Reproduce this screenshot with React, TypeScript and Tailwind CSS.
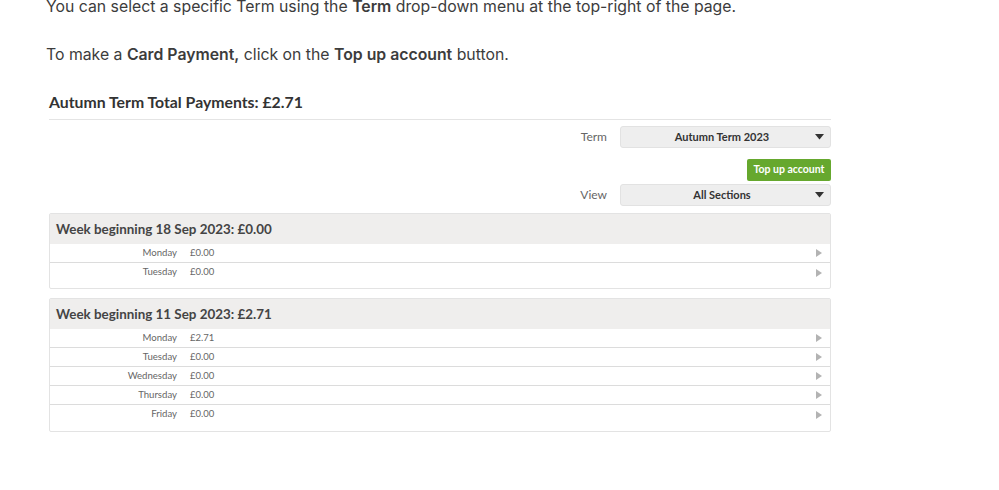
import React from "react";

const week1 = [
  { d: "Monday", a: "£0.00" },
  { d: "Tuesday", a: "£0.00" },
];
const week2 = [
  { d: "Monday", a: "£2.71" },
  { d: "Tuesday", a: "£0.00" },
  { d: "Wednesday", a: "£0.00" },
  { d: "Thursday", a: "£0.00" },
  { d: "Friday", a: "£0.00" },
];

function Caret() {
  return (
    <svg width="9" height="6" viewBox="0 0 9 6" className="shrink-0">
      <path d="M0 0 L9 0 L4.5 5.5 Z" fill="#333" />
    </svg>
  );
}

function Play() {
  return (
    <svg width="6" height="8" viewBox="0 0 6 8" className="shrink-0">
      <path d="M0 0 L6 4 L0 8 Z" fill="#b3b3b3" />
    </svg>
  );
}

function Select({ label, value }: { label: string; value: string }) {
  return (
    <div className="flex items-center justify-end">
      <span className="text-[12px] text-[#666] mr-[13px]">{label}</span>
      <div className="w-[211px] h-[22px] bg-[#eeeeee] border border-[#e2e2e2] rounded-[3px] flex items-center pl-[8px] pr-[6px]">
        <span className="flex-1 text-center text-[11px] font-bold text-[#333]">{value}</span>
        <Caret />
      </div>
    </div>
  );
}

function Week({ title, rows, tall }: { title: string; rows: { d: string; a: string }[]; tall?: boolean }) {
  return (
    <div className={`border border-[#e3e3e3] rounded-[2px] ${tall ? "pb-[7px]" : "pb-[6px]"}`}>
      <div className="h-[30px] bg-[#efeeed] flex items-center px-[6px] text-[13.4px] font-bold text-[#444]">
        {title}
      </div>
      {rows.map((r, i) => (
        <div
          key={i}
          className={`h-[19px] flex items-center ${i < rows.length - 1 ? "border-b border-[#dcdcdc]" : ""}`}
        >
          <span className="w-[127px] text-right text-[9.6px] text-[#666]">{r.d}</span>
          <span className="ml-[13px] text-[9.5px] text-[#666] flex-1">{r.a}</span>
          <span className="mr-[8px]"><Play /></span>
        </div>
      ))}
    </div>
  );
}

export default function App() {
  return (
    <div className="w-[999px] h-[490px] bg-white overflow-hidden relative">
      <div className="pl-[46px] mt-[-5px] text-[15.8px] leading-[24px] text-[#3c3c3c]" style={{ fontFamily: "Inter, sans-serif" }}>
        <p>
          You can select a specific Term using the <b className="font-semibold">Term</b> drop-down menu at the top-right of the page.
        </p>
        <p className="mt-[24px]">
          To make a <b className="font-semibold">Card Payment,</b> click on the <b className="font-semibold">Top up account</b> button.
        </p>
      </div>
      <div className="ml-[49px] w-[782px] mt-[25px]" style={{ fontFamily: "Lato, sans-serif" }}>
        <div className="text-[15.8px] font-bold text-[#333] leading-[20px] pb-[7px] border-b border-[#e4e4e4]">
          Autumn Term Total Payments: £2.71
        </div>
        <div className="mt-[6px] flex flex-col">
          <Select label="Term" value="Autumn Term 2023" />
          <div className="flex justify-end mt-[11px]">
            <div className="w-[84px] h-[22px] bg-[#66a82e] rounded-[2px] flex items-center justify-center text-[10.5px] font-bold text-white">
              Top up account
            </div>
          </div>
          <div className="mt-[3px]">
            <Select label="View" value="All Sections" />
          </div>
        </div>
        <div className="mt-[7px] flex flex-col gap-[9px]">
          <Week title="Week beginning 18 Sep 2023: £0.00" rows={week1} />
          <Week title="Week beginning 11 Sep 2023: £2.71" rows={week2} tall />
        </div>
      </div>
    </div>
  );
}
